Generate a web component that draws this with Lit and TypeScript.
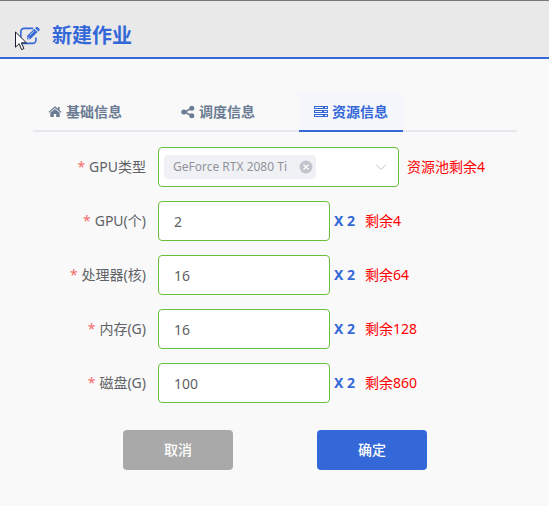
import { LitElement, html, css, svg, nothing } from "lit";
import { customElement, state } from "lit/decorators.js";
import { classMap } from "lit/directives/class-map.js";

interface Amount {
  id: string;
  label: string;
  value: string;
  left: string;
}

const icons: Record<string, unknown> = {
  home: svg`<path d="M7 1.2 .4 6.9l.8.9L7 2.9l5.8 4.9.8-.9-2-1.7V2H9.9v1.7z"/><path d="M7 3.9 2.3 7.8V12h3.5V9h2.4v3h3.5V7.8z"/>`,
  share: svg`<path d="M3.5 7 10.8 3.2M3.5 7l7.3 3.8" fill="none" stroke="currentColor" stroke-width="1.6"/><circle cx="2.8" cy="7" r="2.5"/><circle cx="10.8" cy="3.3" r="2.5"/><circle cx="10.8" cy="10.7" r="2.5"/>`,
  server: svg`<path fill-rule="evenodd" d="M0 1h14v3H0zM1 2v1h8V2zM11 2v1h2V2zM0 5h14v3H0zM1 6v1h7V6zM10 6v1h3V6zM0 9h14v3H0zM1 10v1h8v-1zM11 10v1h2v-1z"/>`,
};

@customElement("app-root")
export class AppRoot extends LitElement {
  @state() private active = 2;

  private tabs = [
    { icon: "home", text: "基础信息" },
    { icon: "share", text: "调度信息" },
    { icon: "server", text: "资源信息" },
  ];

  private amounts: Amount[] = [
    { id: "gpu", label: "GPU(个)", value: "2", left: "4" },
    { id: "cpu", label: "处理器(核)", value: "16", left: "64" },
    { id: "memory", label: "内存(G)", value: "16", left: "128" },
    { id: "disk", label: "磁盘(G)", value: "100", left: "860" },
  ];

  static styles = css`
    :host {
      display: block;
      min-height: 100vh;
      box-sizing: border-box;
      background: #f9f9f9;
      color: #606266;
      font: 14px/20px "Noto Sans", "Noto Sans CJK SC", sans-serif;
    }
    * { box-sizing: border-box; }
    button, input, select { font: inherit; margin: 0; }
    svg { display: block; flex: none; }
    .header {
      display: flex;
      align-items: center;
      gap: 12px;
      height: 59px;
      padding: 14px 20px 0;
      position: relative;
      background: #e9e9e9;
      border-top: 1px solid #777;
      border-bottom: 2px solid #3468d8;
      color: #3468d8;
    }
    .title { margin: 0; font-size: 20px; line-height: 28px; font-weight: 700; }
    .pointer { position: absolute; left: 15px; top: 30px; }
    .content { padding: 33px 32px 36px 33px; }
    .tabs {
      display: flex;
      gap: 29px;
      height: 40px;
      border-bottom: 2px solid #e4e7ed;
    }
    .tab {
      display: flex;
      align-items: center;
      gap: 4px;
      height: 40px;
      padding: 2px 15px 0;
      border: 0;
      border-bottom: 2px solid transparent;
      background: none;
      color: #6b7b93;
      font-weight: 700;
      white-space: nowrap;
    }
    .tab.active { color: #3468d8; background: #f5f7fd; border-bottom-color: #3468d8; }
    .form { display: grid; gap: 14px; padding-top: 15px; }
    .row { display: flex; align-items: center; height: 40px; white-space: nowrap; }
    .label { width: 113px; margin-right: 12px; text-align: right; }
    .label::before { content: "*"; color: #f56c6c; margin-right: 4px; }
    .input, .picker {
      height: 40px;
      border: 1px solid #67c23a;
      border-radius: 4px;
      background: #fff;
      color: #606266;
    }
    .input { width: 172px; padding: 0 15px; }
    .picker { display: grid; grid-template-columns: 1fr; align-items: center; width: 241px; }
    .picker > * { grid-area: 1 / 1; }
    .chip { width: 152px; height: 24px; margin-left: 5px; border-radius: 4px; background: #f0f1f5; }
    .select {
      width: 100%;
      height: 38px;
      padding: 0 14px;
      border: 0;
      appearance: none;
      background: transparent;
      color: #909399;
      font-size: 12px;
    }
    .arrow { justify-self: end; margin-right: 11px; pointer-events: none; }
    .clear { width: 14px; height: 14px; padding: 0; margin-left: 140px; border: 0; background: none; }
    .times { width: 23px; margin-left: 4px; color: #3468d8; font-weight: 700; }
    .hint { margin-left: 8px; color: #f00; }
    .actions { display: flex; justify-content: center; gap: 84px; margin-top: 27px; }
    .action {
      width: 110px;
      height: 40px;
      border: 0;
      border-radius: 4px;
      color: #fff;
      background: #a9a9a9;
      font-weight: 500;
    }
    .action.primary { background: #3468d8; }
  `;

  render() {
    return html`
      <header class="header">
        <svg width="20" height="18" viewBox="0 0 20 18" fill="none" stroke="currentColor" aria-hidden="true">
          <path d="M13.2 1.4H4A3.2 3.2 0 0 0 .8 4.6v8.6A3.2 3.2 0 0 0 4 16.4h8.7a3.2 3.2 0 0 0 3.2-3.2v-2.6" stroke-width="1.6" />
          <path d="M7 12.3V9.1L14.3 1.8l3.2 3.2-7.3 7.3z" fill="currentColor" stroke="none" />
          <path d="m15.1 1 1-1q.7-.5 1.4 0l2 2q.5.7 0 1.3l-1.1 1.1z" fill="currentColor" stroke="none" />
          <path d="m9.8 8.4 4.6-4.6M8 9.7v1.6h1.6" stroke="#e9e9e9" stroke-width=".8" />
        </svg>
        <h1 class="title">新建作业</h1>
        <svg class="pointer" width="12" height="20" viewBox="0 0 12 20" aria-hidden="true">
          <path d="M.5 1v15.2l3.6-3.5 2.5 5.9 2.3-1-2.5-5.8h5z" fill="#fff" stroke="#1b1b2b" />
        </svg>
      </header>
      <main class="content">
        <div class="tabs" role="tablist">
          ${this.tabs.map(
            (t, i) => html`<button
              type="button"
              role="tab"
              aria-selected=${i === this.active}
              class=${classMap({ tab: true, active: i === this.active })}
              @click=${() => (this.active = i)}
            ><svg width="14" height="14" viewBox="0 0 14 14" fill="currentColor" aria-hidden="true">${icons[t.icon] ?? nothing}</svg>${t.text}</button>`
          )}
        </div>
        <form @submit=${(e: Event) => e.preventDefault()}>
          <div class="form">
            <div class="row">
              <label class="label" for="type">GPU类型</label>
              <div class="picker">
                <span class="chip"></span>
                <select class="select" id="type"><option>GeForce RTX 2080 Ti</option></select>
                <svg class="arrow" width="12" height="8" viewBox="0 0 12 8" fill="none" stroke="#c0c4cc" aria-hidden="true"><path d="m1 1.5 5 5 5-5" /></svg>
                <button class="clear" type="button" aria-label="清除">
                  <svg width="14" height="14" viewBox="0 0 14 14"><circle cx="7" cy="7" r="6.5" fill="#c0c4cc" /><path d="m4.5 4.5 5 5m0-5-5 5" stroke="#fff" stroke-width="1.2" /></svg>
                </button>
              </div>
              <span class="hint">资源池剩余4</span>
            </div>
            ${this.amounts.map(
              (a) => html`<div class="row">
                <label class="label" for=${a.id}>${a.label}</label>
                <input class="input" id=${a.id} type="text" .value=${a.value} />
                <span class="times">X 2</span>
                <span class="hint">剩余${a.left}</span>
              </div>`
            )}
          </div>
          <div class="actions">
            <button class="action" type="button">取消</button>
            <button class="action primary" type="submit">确定</button>
          </div>
        </form>
      </main>
    `;
  }
}
